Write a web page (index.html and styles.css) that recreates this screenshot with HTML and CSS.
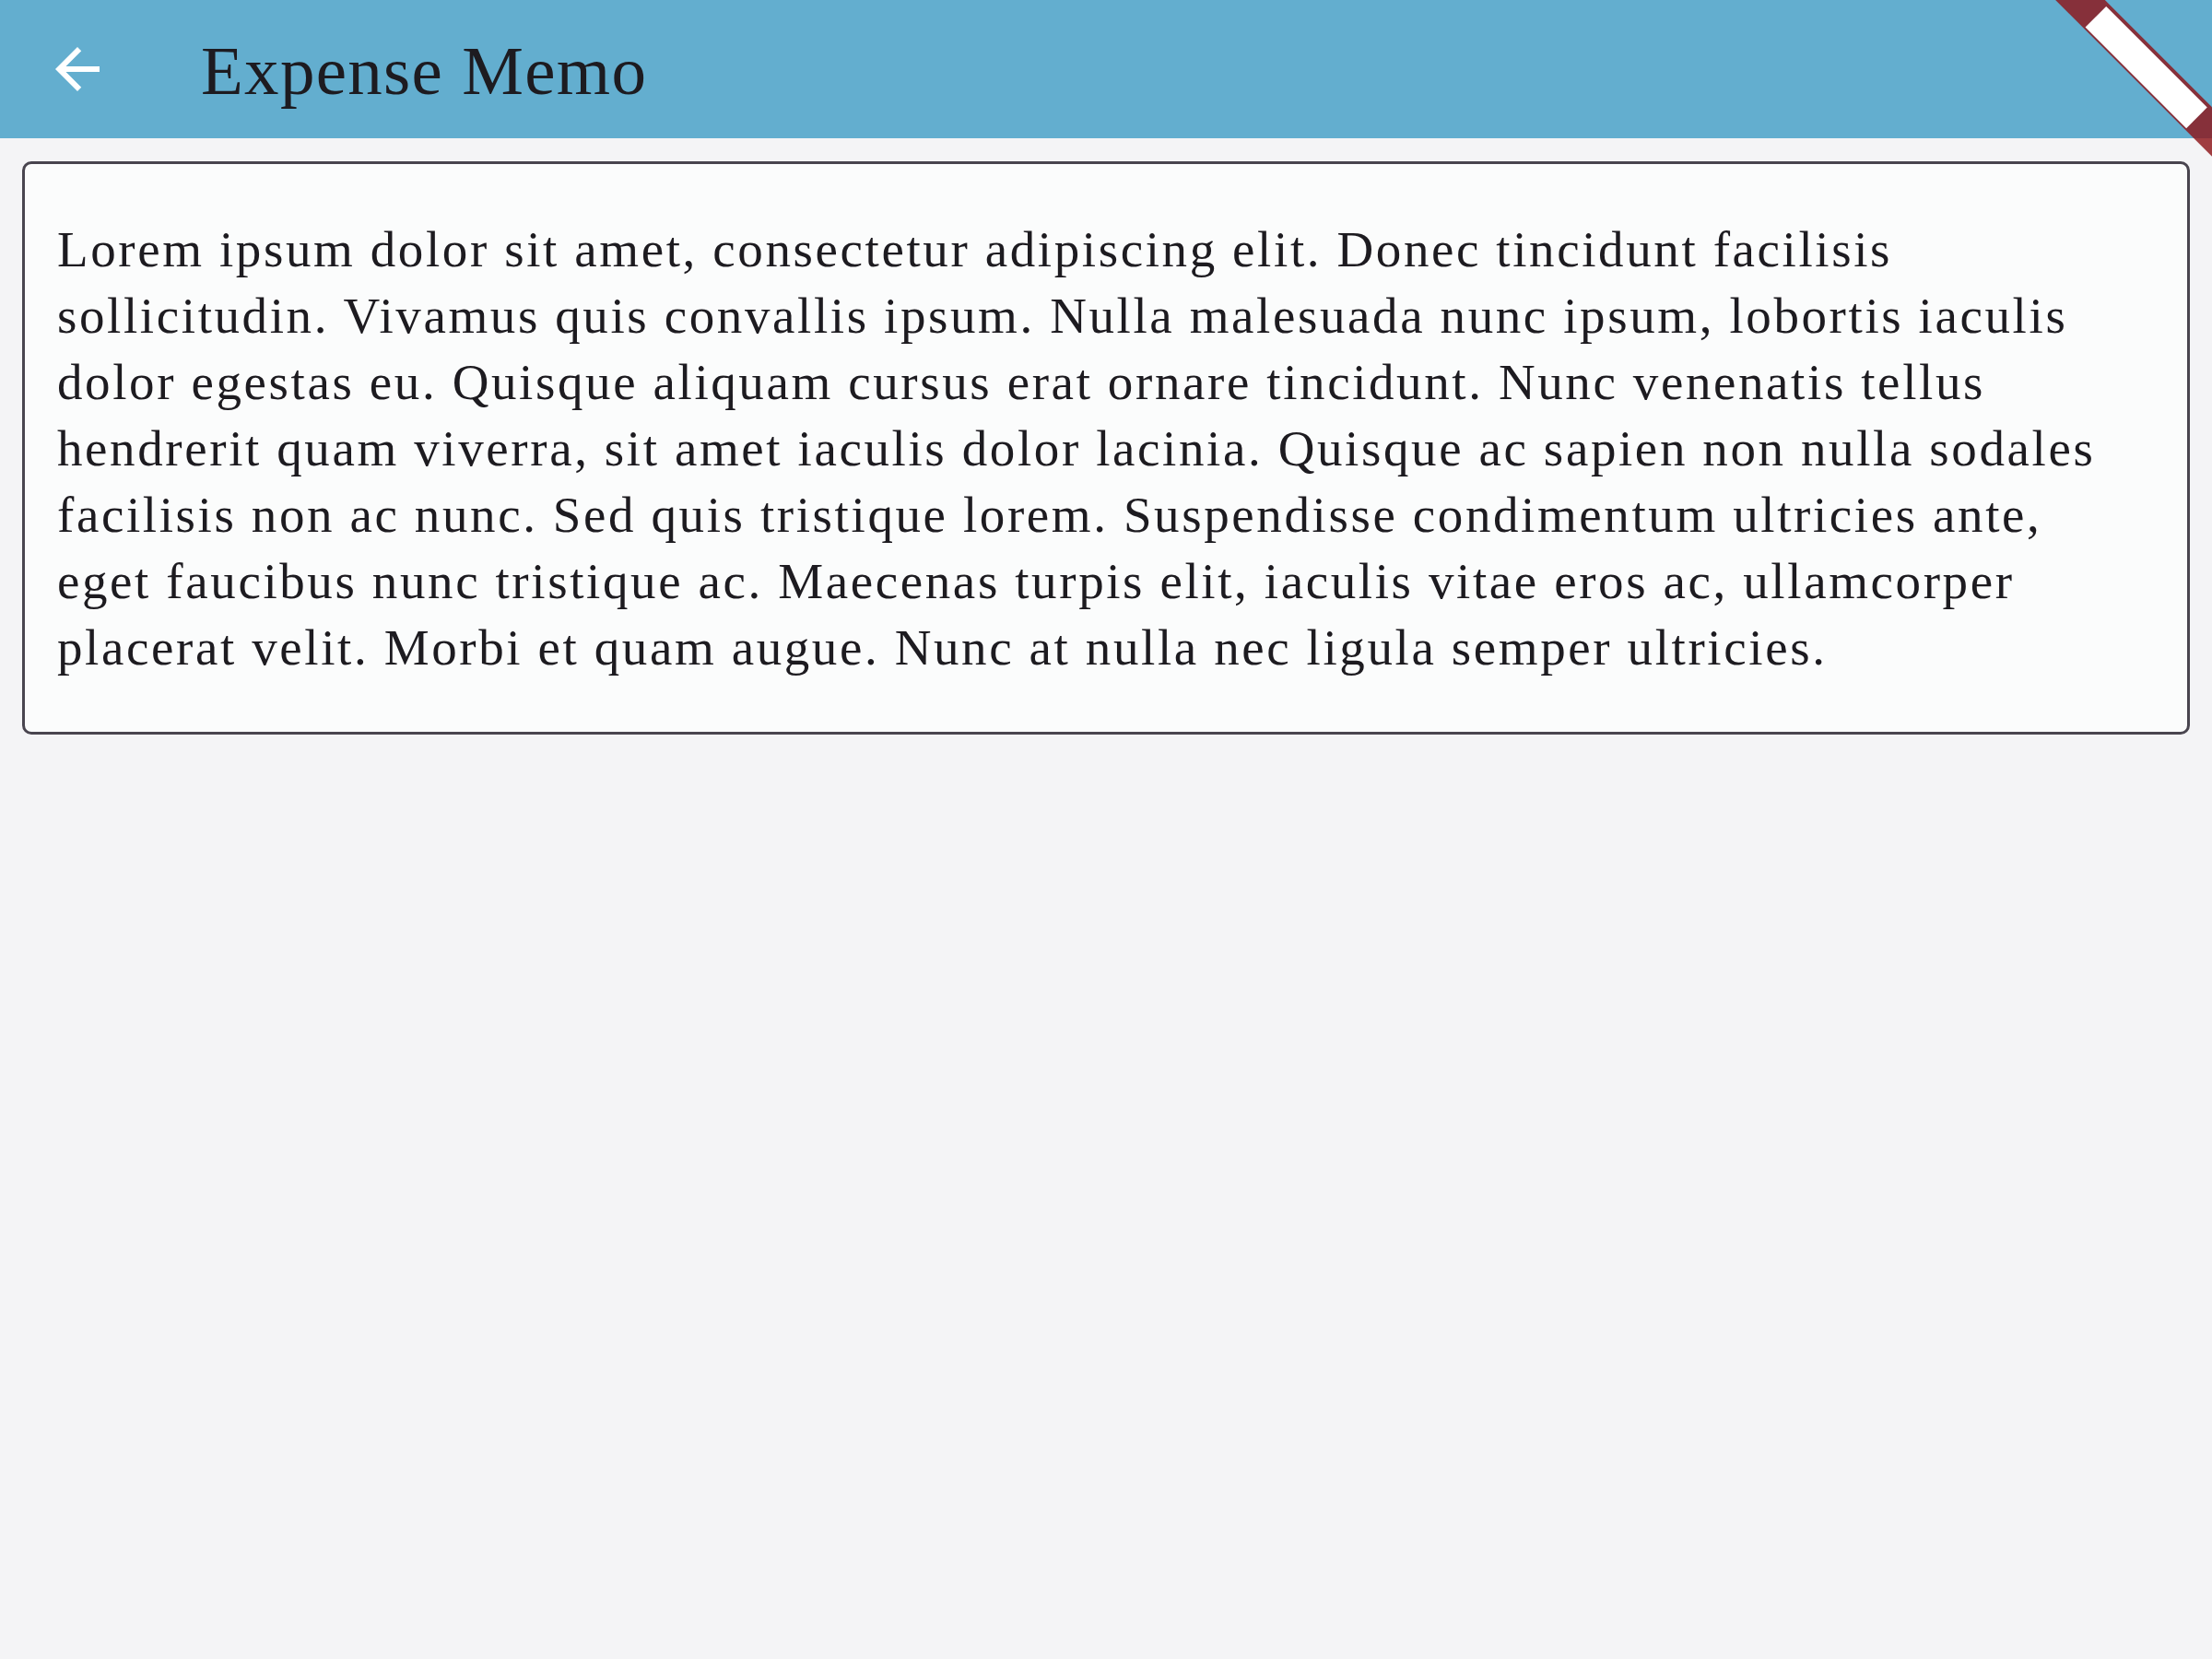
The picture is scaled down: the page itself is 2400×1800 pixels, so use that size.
FILE: index.html
```html
<!DOCTYPE html>
<html lang="en">
<head>
<meta charset="utf-8">
<title>Expense Memo</title>
<link rel="stylesheet" href="styles.css">
</head>
<body>
<header class="app-bar">
  <button class="back-btn" aria-label="Back">
    <svg class="back-icon" viewBox="0 0 24 24" width="72" height="72"><path d="M20 11H7.83l5.59-5.59L12 4l-8 8 8 8 1.41-1.41L7.83 13H20v-2z" fill="#ffffff"/></svg>
  </button>
  <h1 class="title">Expense Memo</h1>
</header>
<main class="content">
  <section class="memo-card">
    <p class="memo-text">Lorem ipsum dolor sit amet, consectetur adipiscing elit. Donec tincidunt facilisis sollicitudin. Vivamus quis convallis ipsum. Nulla malesuada nunc ipsum, lobortis iaculis dolor egestas eu. Quisque aliquam cursus erat ornare tincidunt. Nunc venenatis tellus hendrerit quam viverra, sit amet iaculis dolor lacinia. Quisque ac sapien non nulla sodales facilisis non ac nunc. Sed quis tristique lorem. Suspendisse condimentum ultricies ante, eget faucibus nunc tristique ac. Maecenas turpis elit, iaculis vitae eros ac, ullamcorper placerat velit. Morbi et quam augue. Nunc at nulla nec ligula semper ultricies.</p>
  </section>
</main>
<div class="ribbon-wrap" aria-hidden="true">
  <div class="ribbon"><span class="ribbon-label"></span></div>
</div>
</body>
</html>
```
FILE: styles.css
```css
* { box-sizing: border-box; }
html, body {
  margin: 0;
  padding: 0;
  background: #f4f4f6;
  font-family: "Liberation Serif", "Times New Roman", serif;
  color: #1d1b20;
}
body { min-height: 1800px; position: relative; overflow: hidden; }

.app-bar {
  height: 150px;
  background: #63aecf;
  display: flex;
  align-items: center;
  padding-left: 48px;
}
.back-btn {
  width: 72px;
  height: 72px;
  padding: 0;
  border: none;
  background: transparent;
  display: flex;
  align-items: center;
  justify-content: center;
}
.back-icon { display: block; }
.title {
  margin: 0 0 0 98px;
  font-size: 75px;
  font-weight: 400;
  line-height: 1;
  letter-spacing: 1.3px;
  padding-top: 3px;
  color: #1d1b20;
}

.content { padding: 25px 24px; }
.memo-card {
  background: #fbfcfc;
  border: 3px solid #49454f;
  border-radius: 10px;
  padding: 57px 70px 55px 35px;
}
.memo-text {
  margin: 0;
  font-size: 55px;
  line-height: 72px;
  letter-spacing: 2.6px;
  color: #1d1b20;
}

.ribbon-wrap {
  position: absolute;
  top: 0;
  right: 0;
  width: 240px;
  height: 240px;
  overflow: hidden;
  pointer-events: none;
}
.ribbon {
  position: absolute;
  left: -31px;
  top: 53px;
  width: 400px;
  height: 38px;
  background: rgba(142, 21, 24, 0.82);
  transform: rotate(45deg);
  display: flex;
  justify-content: center;
  padding-top: 4px;
}
.ribbon-label {
  display: block;
  width: 155px;
  height: 32px;
  background: #ffffff;
}
```
